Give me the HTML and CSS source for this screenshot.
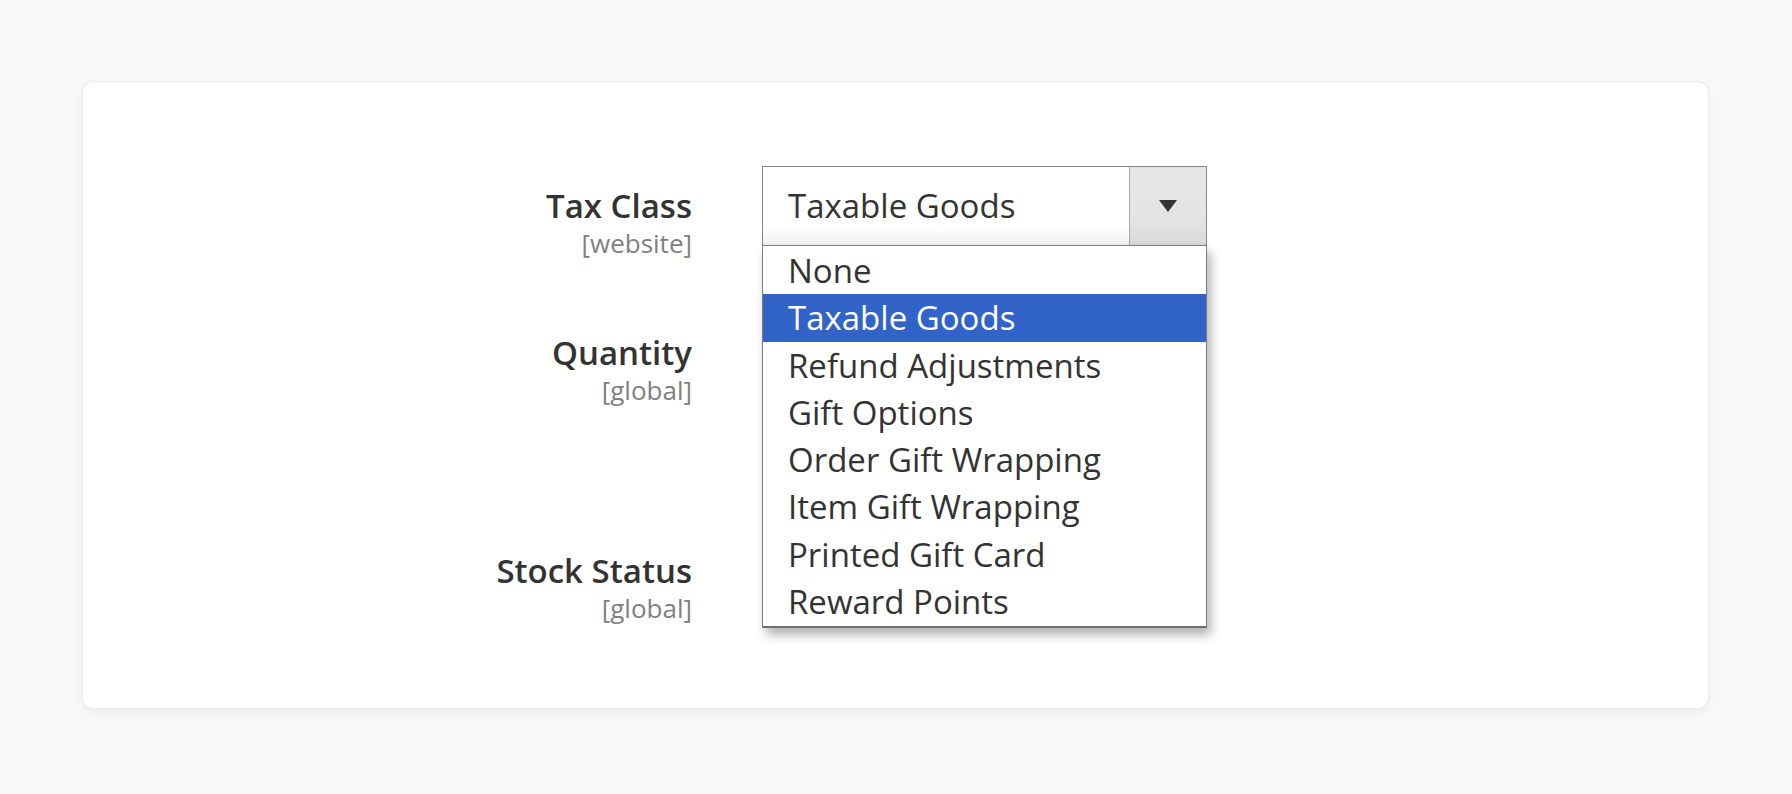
FILE: index.html
```html
<!DOCTYPE html>
<html lang="en">
<head>
<meta charset="utf-8">
<title>Product tax settings</title>
<link rel="stylesheet" href="styles.css">
</head>
<body>
<div class="card">
  <div class="field field-tax">
    <div class="label-col">
      <div class="label">Tax Class</div>
      <div class="scope">[website]</div>
    </div>
    <div class="control">
      <div class="select open">
        <span class="select-value">Taxable Goods</span>
        <span class="select-btn">
          <svg class="arrow" width="18" height="12" viewBox="0 0 18 12"><path d="M0 0 H18 L9 12 Z" fill="#333"/></svg>
        </span>
        <ul class="options">
          <li class="option">None</li>
          <li class="option selected">Taxable Goods</li>
          <li class="option">Refund Adjustments</li>
          <li class="option">Gift Options</li>
          <li class="option">Order Gift Wrapping</li>
          <li class="option">Item Gift Wrapping</li>
          <li class="option">Printed Gift Card</li>
          <li class="option">Reward Points</li>
        </ul>
      </div>
    </div>
  </div>
  <div class="field field-qty">
    <div class="label-col">
      <div class="label">Quantity</div>
      <div class="scope">[global]</div>
    </div>
    <div class="control">
      <div class="input"></div>
      <div class="note"></div>
    </div>
  </div>
  <div class="field field-stock">
    <div class="label-col">
      <div class="label">Stock Status</div>
      <div class="scope">[global]</div>
    </div>
    <div class="control">
      <div class="input"></div>
    </div>
  </div>
</div>
</body>
</html>
```

FILE: styles.css
```css
* { box-sizing: border-box; }
html, body { margin: 0; padding: 0; }
body {
  background: #f8f8f8;
  font-family: "Open Sans", "Liberation Sans", sans-serif;
  color: #303030;
  width: 1792px;
  height: 794px;
  overflow: hidden;
  padding-top: 82px;
}
.card {
  margin-left: 83px;
  width: 1625px;
  height: 626px;
  background: #fff;
  border-radius: 10px;
  box-shadow: 0 0 0 1px #ececec, 0 4px 10px rgba(0,0,0,0.06);
  padding-top: 84px;
}
.field {
  display: grid;
  grid-template-columns: 609px 445px;
  column-gap: 70px;
  align-items: start;
}
.field-tax { margin-bottom: 53px; }
.field-qty { margin-bottom: 79px; }
.label-col { text-align: right; padding-top: 20px; }
.label {
  font-size: 33px;
  font-weight: 600;
  line-height: 40px;
  color: #333;
}
.scope {
  font-size: 26px;
  line-height: 34px;
  color: #808080;
}
.control { position: relative; }
.select {
  position: relative;
  height: 81px;
  border: 1px solid #858585;
  border-bottom: 2px solid #777;
  background: linear-gradient(to bottom, #ffffff 0%, #ffffff 76%, #f0f0f0 100%);
  display: flex;
  align-items: center;
}
.select-value {
  flex: 1;
  padding-left: 25px;
  font-size: 33px;
  line-height: 44px;
  color: #333;
}
.select-btn {
  width: 77px;
  align-self: stretch;
  border-left: 1px solid #a9a9a9;
  background: linear-gradient(to bottom, #e6e6e6 0%, #e3e3e3 72%, #d8d8d8 100%);
  display: flex;
  align-items: center;
  justify-content: center;
}
.arrow { display: block; }
.options {
  position: absolute;
  z-index: 10;
  left: -1px;
  top: 100%;
  width: 445px;
  margin: 0;
  padding: 1px 0 1px;
  list-style: none;
  background: #fff;
  border: 1px solid #7d7d7d;
  border-bottom: 2px solid #707070;
  box-shadow: 4px 7px 10px rgba(0,0,0,0.3);
}
.option {
  height: 47.3px;
  padding-left: 25px;
  font-size: 33px;
  line-height: 47.3px;
  color: #333;
  white-space: nowrap;
}
.option.selected {
  background: #3163c9;
  color: #fff;
}
.input {
  height: 81px;
  border: 1px solid #adadad;
  background: #fff;
}
.note {
  height: 58px;
}
```
